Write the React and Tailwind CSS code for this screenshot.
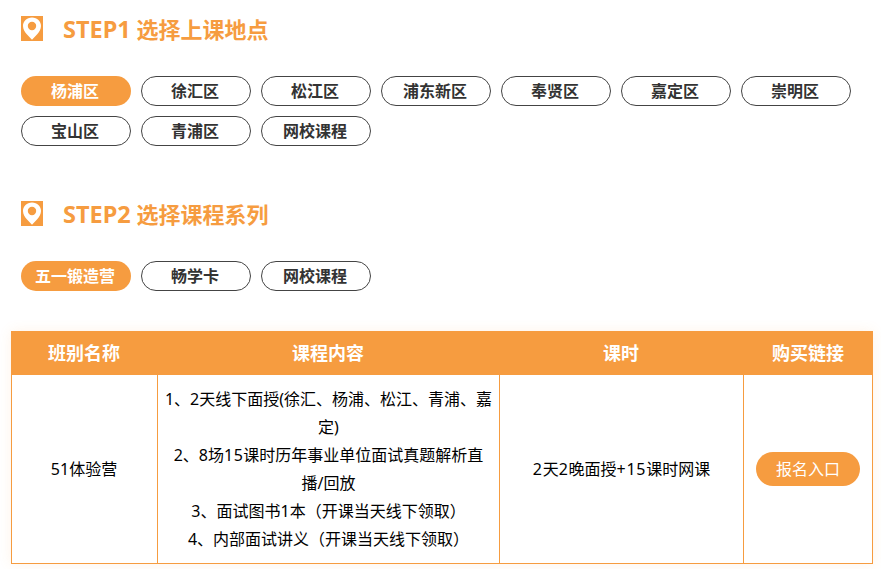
const font = { fontFamily: '"Noto Sans", "Noto Sans CJK SC", sans-serif' };

function Pin() {
  return (
    <svg width="22" height="25" viewBox="0 0 22 25" className="shrink-0">
      <rect width="22" height="25" fill="#f69c40" />
      <path fillRule="evenodd" fill="#fff" d="M11 1.5C5.8 1.5 2 5.3 2 10c0 3.2 1.8 5.9 3.8 8.3 1.7 2 3.5 3.6 5.2 5.4 1.7-1.8 3.5-3.4 5.2-5.4 2-2.4 3.8-5.1 3.8-8.3 0-4.7-3.8-8.5-9-8.5zM11 5.8a4.2 4.2 0 1 1 0 8.4 4.2 4.2 0 0 1 0-8.4z" />
    </svg>
  );
}

function Pill({ label, active }) {
  return (
    <div
      className={
        active
          ? "w-[110px] h-[30px] pr-[2px] rounded-[15px] bg-[#f69c40] text-white flex items-center justify-center text-[16px] font-bold"
          : "w-[110px] h-[30px] pr-[2px] rounded-[15px] border border-[#444444] text-[#333333] flex items-center justify-center text-[16px] font-bold"
      }
    >
      {label}
    </div>
  );
}

function Step({ step, title, items, className }) {
  return (
    <section className={className}>
      <div className="flex items-center h-[25px]">
        <Pin />
        <h2 className="ml-[20px] text-[22px] leading-[30px] font-bold text-[#f69c40]">
          <span className="text-[23.5px]">{step}</span> {title}
        </h2>
      </div>
      <div className="mt-[35px] flex flex-wrap gap-[10px] w-[840px]">
        {items.map((t, i) => (
          <Pill key={t} label={t} active={i === 0} />
        ))}
      </div>
    </section>
  );
}

export default function App() {
  return (
    <div style={font} className="w-[881px] h-[569px] overflow-hidden bg-white relative">
      <div className="pl-[21px] pt-[16px]">
        <Step step="STEP1" title="选择上课地点" items={["杨浦区", "徐汇区", "松江区", "浦东新区", "奉贤区", "嘉定区", "崇明区", "宝山区", "青浦区", "网校课程"]} />
        <Step step="STEP2" className="mt-[55px]" title="选择课程系列" items={["五一锻造营", "畅学卡", "网校课程"]} />
      </div>
      <div className="ml-[11px] mt-[40px] w-[862px] shadow-[0_0_12px_rgba(247,157,63,0.12)]">
        <div className="grid grid-cols-[146px_342px_244px_130px] h-[44px] bg-[#f69c40] text-white font-bold text-[18px]">
          <div className="flex items-center justify-center">班别名称</div>
          <div className="flex items-center justify-center">课程内容</div>
          <div className="flex items-center justify-center">课时</div>
          <div className="flex items-center justify-center">购买链接</div>
        </div>
        <div className="grid grid-cols-[146px_342px_244px_130px] h-[189px] border-x border-b border-[#f69c40] text-[16px] text-black text-center">
          <div className="flex items-center justify-center border-r border-[#f69c40] -ml-px">51体验营</div>
          <div className="flex flex-col items-center justify-center border-r border-[#f69c40] px-[6px] leading-[28px]">
            <p>1、2天线下面授(徐汇、杨浦、松江、青浦、嘉定)</p>
            <p>2、8场<span className="tracking-[0.5px]">15</span>课时历年事业单位面试真题解析直播/回放</p>
            <p>3、面试图书1本（开课当天线下领取）</p>
            <p>4、内部面试讲义（开课当天线下领取）</p>
          </div>
          <div className="flex items-center justify-center border-r border-[#f69c40]">
            <span><span className="tracking-[0.7px]">2</span>天<span className="tracking-[0.7px]">2</span>晚面授<span className="tracking-[0.7px]">+15</span>课时网课</span>
          </div>
          <div className="flex items-center justify-center pr-[2px]">
            <div className="w-[104px] h-[34px] rounded-[17px] bg-[#f69c40] text-white text-[16px] flex items-center justify-center">报名入口</div>
          </div>
        </div>
      </div>
    </div>
  );
}
